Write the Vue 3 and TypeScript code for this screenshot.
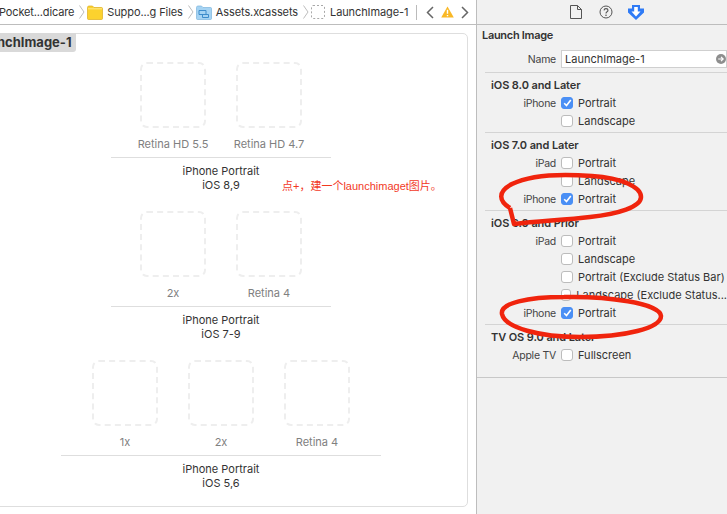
<script setup lang="ts">
interface Row { label?: string; text: string; checked?: boolean }
interface Section { title: string; rows: Row[] }
const sections: Section[] = [
  { title: 'iOS 8.0 and Later', rows: [
    { label: 'iPhone', text: 'Portrait', checked: true },
    { text: 'Landscape' },
  ] },
  { title: 'iOS 7.0 and Later', rows: [
    { label: 'iPad', text: 'Portrait' },
    { text: 'Landscape' },
    { label: 'iPhone', text: 'Portrait', checked: true },
  ] },
  { title: 'iOS 6.0 and Prior', rows: [
    { label: 'iPad', text: 'Portrait' },
    { text: 'Landscape' },
    { text: 'Portrait (Exclude Status Bar)' },
    { text: 'Landscape (Exclude Status...' },
    { label: 'iPhone', text: 'Portrait', checked: true },
  ] },
  { title: 'TV OS 9.0 and Later', rows: [
    { label: 'Apple TV', text: 'Fullscreen' },
  ] },
]
const groups = [
  { slots: ['Retina HD 5.5', 'Retina HD 4.7'], os: 'iOS 8,9', cls: 'g1' },
  { slots: ['2x', 'Retina 4'], os: 'iOS 7-9', cls: 'g2' },
  { slots: ['1x', '2x', 'Retina 4'], os: 'iOS 5,6', cls: 'g3' },
]
</script>

<template>
  <div class="app">
    <div class="main">
      <div class="crumbs">
        <span class="c c-first">Pocket...dicare</span>
        <svg class="chev" width="6" height="14" viewBox="0 0 6 14"><path d="M.5.500 5 7 .5 13.500" fill="none" stroke="#bdbdbd"/></svg>
        <svg class="ic" width="16" height="15" viewBox="0 0 16 15"><path d="M.5 2.500Q.5 1 2 1h3.500L7 2.500h7.500q1 0 1 1v10q0 1-1 1h-13q-1 0-1-1z" fill="#fcd22e" stroke="#dcae1c" stroke-width=".7"/><path d="M1 3.800h14" stroke="#ffe98a"/></svg>
        <span class="c">Suppo...g Files</span>
        <svg class="chev" width="6" height="14" viewBox="0 0 6 14"><path d="M.5.500 5 7 .5 13.500" fill="none" stroke="#bdbdbd"/></svg>
        <svg class="ic" width="16" height="15" viewBox="0 0 16 15"><path d="M.5 2.500Q.5 1 2 1h3.500L7 2.500h7.500q1 0 1 1v10q0 1-1 1h-13q-1 0-1-1z" fill="#a5d3f3" stroke="#7db5dd" stroke-width=".7"/><path d="M3 5.500h7v4H3zM6.500 9.500h6v3h-6z" fill="none" stroke="#3d8ccb"/></svg>
        <span class="c">Assets.xcassets</span>
        <svg class="chev" width="6" height="14" viewBox="0 0 6 14"><path d="M.5.500 5 7 .5 13.500" fill="none" stroke="#bdbdbd"/></svg>
        <svg class="ic ic-dash" width="14" height="14" viewBox="0 0 14 14"><rect x=".5" y=".5" width="13" height="13" rx="1.500" fill="none" stroke="#a9a9a9" stroke-dasharray="2 2"/></svg>
        <span class="c c-last">LaunchImage-1</span>
        <span class="vbar"></span>
        <svg class="nav" width="8" height="13" viewBox="0 0 8 13"><path d="M7 1 1.500 6.500 7 12" fill="none" stroke="#666" stroke-width="1.500"/></svg>
        <svg class="warn" width="13" height="12" viewBox="0 0 13 12"><path d="M6.500.5 12.800 11.500H.2z" fill="#f9b826"/><path d="M6.500 3.800v4M6.500 9v1.300" stroke="#fff" stroke-width="1.400"/></svg>
        <svg class="nav" width="8" height="13" viewBox="0 0 8 13"><path d="M1 1 6.500 6.500 1 12" fill="none" stroke="#666" stroke-width="1.500"/></svg>
      </div>
      <div class="body">
        <div class="card">
          <div class="pill"><span>LaunchImage-1</span></div>
          <div v-for="g in groups" :key="g.cls" class="group" :class="g.cls">
            <div class="slots">
              <div v-for="s in g.slots" :key="s" class="slot">
                <div class="well"></div>
                <div class="slot-label">{{ s }}</div>
              </div>
            </div>
            <div class="cap">
              <div>iPhone Portrait</div>
              <div>{{ g.os }}</div>
            </div>
          </div>
          <div class="note">点+，建一个launchimaget图片。</div>
        </div>
      </div>
    </div>

    <aside class="side">
      <div class="tabs">
        <svg width="12" height="14" viewBox="0 0 12 14"><path d="M.5.500h7l4 4v9H.5z M7.500.5v4h4" fill="none" stroke="#555"/></svg>
        <svg width="14" height="14" viewBox="0 0 14 14"><circle cx="7" cy="7" r="6" fill="none" stroke="#555"/><path d="M5 5.400Q5.200 3.600 7 3.600 9 3.600 9 5.300 9 6.300 7.800 6.900 7 7.300 7 8.400" fill="none" stroke="#555" stroke-width="1.100"/><circle cx="7" cy="10.200" r=".8" fill="#555"/></svg>
        <svg class="tab-on" width="16" height="15" viewBox="0 0 16 15"><path d="M4 0h8v3.500h4v4L8 15 0 7.500v-4h4z" fill="#2f7bf6"/><path d="M6.200 2h3.600v4.500h2.700L8 11.500 3.500 6.500h2.700z" fill="#fff"/></svg>
      </div>
      <div class="panel">
        <div class="head">Launch Image</div>
        <div class="name-row">
          <span class="lab">Name</span>
          <div class="field">
            <span>LaunchImage-1</span>
            <svg width="10" height="10" viewBox="0 0 10 10"><circle cx="5" cy="5" r="5" fill="#8e8e8e"/><path d="M2.200 5h5M5 2.800 7.200 5 5 7.200" fill="none" stroke="#fff" stroke-width="1.200"/></svg>
          </div>
        </div>
        <section v-for="sec in sections" :key="sec.title" class="sec">
          <div class="sec-title">{{ sec.title }}</div>
          <div v-for="(r, i) in sec.rows" :key="i" class="row">
            <span class="lab">{{ r.label }}</span>
            <span class="box" :class="{ on: r.checked }">
              <svg v-if="r.checked" width="9" height="8" viewBox="0 0 9 8"><path d="M1.200 4.200 3.500 6.500 7.800 1" fill="none" stroke="#fff" stroke-width="1.600"/></svg>
            </span>
            <span class="txt">{{ r.text }}</span>
          </div>
        </section>
        <div class="end"></div>
      </div>
    </aside>

    <svg class="ink" width="727" height="514" viewBox="0 0 727 514">
      <path d="M510 208C499 201 497 192 512 184 532 174 566 174 592 176 622 178 641 187 641 197 641 207 618 214 590 217 566 220 540 221 514 224L510 208" fill="none" stroke="#f0240d" stroke-width="4.500" stroke-linejoin="round"/>
      <path d="M502 314C500 303 528 297 564 297 606 296 660 303 661 316 661 328 625 337 580 337 540 337 505 328 502 314Z" fill="none" stroke="#f0240d" stroke-width="4.500"/>
    </svg>
  </div>
</template>

<style>
html, body { margin: 0; background: #fff; }
</style>

<style scoped>
.app {
  position: relative;
  width: 727px;
  height: 514px;
  overflow: hidden;
  display: flex;
  font-family: Inter, "Noto Sans CJK SC", sans-serif;
  font-size: 11px;
  color: #333;
  background: #fff;
}
.main { width: 476px; flex: none; overflow: hidden; }
.crumbs {
  height: 25px;
  box-sizing: border-box;
  border-bottom: 1px solid #bdbdbd;
  display: flex;
  align-items: center;
  white-space: nowrap;
  color: #333;
  letter-spacing: -0.1px;
}
.c { flex: none; margin-right: 5px; }
.c-first { margin-left: -1px; letter-spacing: -0.15px; }
.c-last { margin-right: 8px; }
.chev { flex: none; margin-right: 2px; }
.ic { flex: none; margin-right: 4px; }
.ic-dash { margin-right: 5px; }
.vbar { width: 1px; height: 15px; background: #bbb; margin-right: 9px; flex: none; }
.nav { flex: none; }
.warn { margin: 0 7px; flex: none; }
.body { padding-top: 8px; }
.card {
  position: relative;
  width: 494px;
  height: 474px;
  margin-left: -26px;
  box-sizing: border-box;
  border: 1px solid #dedede;
  border-radius: 5px;
  display: flex;
  flex-direction: column;
  align-items: center;
}
.pill {
  position: absolute;
  left: -1px;
  top: -1px;
  width: 102px;
  height: 19px;
  background: #d9d9d9;
  border-radius: 0 0 3px 0;
  font-size: 13px;
  font-weight: 700;
  text-align: right;
  line-height: 19px;
  padding-right: 6px;
  box-sizing: border-box;
  overflow: hidden;
  white-space: nowrap;
}
.group { display: flex; flex-direction: column; align-items: center; }
.g1 { margin-top: 28px; }
.g2, .g3 { margin-top: 19px; }
.slots {
  display: flex;
  gap: 30px;
  padding-bottom: 6px;
  border-bottom: 1px solid #dedede;
  justify-content: center;
  width: 220px;
  box-sizing: border-box;
}
.g3 .slots { width: 320px; }
.slot { width: 66px; display: flex; flex-direction: column; align-items: center; }
.well {
  width: 66px;
  height: 66px;
  box-sizing: border-box;
  border: 2px dashed #eeeeee;
  border-radius: 7px;
}
.slot-label {
  margin-top: 9px;
  height: 14px;
  line-height: 14px;
  color: #808080;
  white-space: nowrap;
}
.cap { margin-top: 6px; text-align: center; line-height: 14px; color: #333; }
.note {
  position: absolute;
  left: 307px;
  top: 145px;
  color: #f2391f;
  font-family: "Liberation Sans", "Noto Sans CJK SC", sans-serif;
  font-size: 11px;
  line-height: 14px;
  white-space: nowrap;
}
.side {
  width: 251px;
  flex: none;
  box-sizing: border-box;
  border-left: 1px solid #bdbdbd;
  background: #f1f1f1;
}
.tabs {
  height: 25px;
  box-sizing: border-box;
  border-bottom: 1px solid #bdbdbd;
  display: flex;
  align-items: center;
  gap: 17px;
  padding-left: 93px;
}
.tab-on { margin-left: -2px; }
.head { font-weight: 600; padding: 3px 0 0 5px; height: 15px; line-height: 14px; letter-spacing: -0.3px; }
.name-row { display: flex; align-items: center; margin: 7px 0 4px; height: 18px; }
.lab { width: 79px; flex: none; text-align: right; color: #444; font-size: 10.5px; letter-spacing: -0.25px; }
.field {
  margin-left: 5px;
  flex: 1;
  height: 18px;
  box-sizing: border-box;
  background: #fff;
  border: 1px solid #cfcfcf;
  display: flex;
  align-items: center;
  justify-content: space-between;
  padding: 0 0 0 3px;
}
.sec { margin: 2px 0 0 8px; border-top: 1px solid #d4d4d4; }
.sec-title { font-weight: 600; letter-spacing: -0.1px; padding: 5px 0 1px 6px; height: 15px; line-height: 15px; }
.row { display: flex; align-items: center; height: 18px; margin-left: -8px; }
.box {
  margin-left: 5px;
  width: 12px;
  height: 12px;
  box-sizing: border-box;
  border: 1px solid #bcbcbc;
  border-radius: 3px;
  background: #fff;
  display: flex;
  align-items: center;
  justify-content: center;
}
.box.on { background: #4a8ff5; border-color: #4a8ff5; }
.txt { margin-left: 5px; white-space: nowrap; }
.end { margin-top: 13px; border-top: 1px solid #c8c8c8; }
.ink { position: absolute; left: 0; top: 0; pointer-events: none; }
</style>
